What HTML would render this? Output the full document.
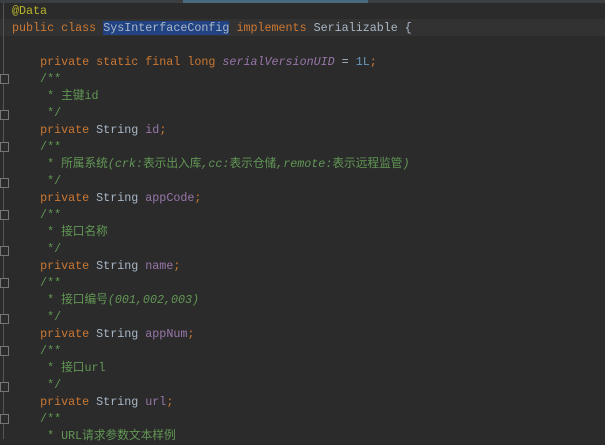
<!DOCTYPE html><html><head><meta charset="utf-8"><style>
body{margin:0;width:605px;height:439px;overflow:hidden;background:#2b2b2b;position:relative;font-family:"Liberation Mono","Noto Sans CJK SC",monospace;font-size:11.7px;color:#a9b7c6}
.l{position:absolute;left:12px;height:17px;line-height:17px;white-space:pre;margin-top:1px}
.k{color:#cc7832}.c{color:#629755}.f{color:#9876aa}.n{color:#6897bb}.a{color:#bbb529}.i{font-style:italic}
.top{position:absolute;top:0;left:0;width:605px;height:3px;background:#3c3f41}
.top b{position:absolute;left:183px;width:185px;height:3px;background:#4a6a80}
.hl{position:absolute;left:0;top:19px;width:605px;height:17px;background:#323232}
.g{position:absolute;left:3px;top:3px;width:1px;height:436px;background:#555}
.fm{position:absolute;left:0;width:7px;height:8px;border:1px solid #777;background:#2b2b2b}
.sel{background:#214283}
</style></head><body>
<div class="top"><b></b></div><div class="hl"></div><div class="g"></div>
<div class="fm" style="top:74px"></div><div class="fm" style="top:110px"></div>
<div class="fm" style="top:142px"></div><div class="fm" style="top:178px"></div>
<div class="fm" style="top:210px"></div><div class="fm" style="top:246px"></div>
<div class="fm" style="top:278px"></div><div class="fm" style="top:314px"></div>
<div class="fm" style="top:346px"></div><div class="fm" style="top:382px"></div>
<div class="fm" style="top:414px"></div>
<div class="l" style="top:2px"><span class="a">@Data</span></div>
<div class="l" style="top:19px"><span class="k">public class </span><span class="sel">SysInterfaceConfig</span> <span class="k">implements </span>Serializable {</div>
<div class="l" style="top:53px">    <span class="k">private static final long </span><span class="f i">serialVersionUID</span> = <span class="n">1L</span><span class="k">;</span></div>
<div class="l c" style="top:70px">    /**</div>
<div class="l c" style="top:87px">     * 主键id</div>
<div class="l c" style="top:104px">     */</div>
<div class="l" style="top:121px">    <span class="k">private </span>String <span class="f">id</span><span class="k">;</span></div>
<div class="l c" style="top:138px">    /**</div>
<div class="l c" style="top:155px">     * 所属系统<span class="i">(crk:</span>表示出入库<span class="i">,cc:</span>表示仓储<span class="i">,remote:</span>表示远程监管<span class="i">)</span></div>
<div class="l c" style="top:172px">     */</div>
<div class="l" style="top:189px">    <span class="k">private </span>String <span class="f">appCode</span><span class="k">;</span></div>
<div class="l c" style="top:206px">    /**</div>
<div class="l c" style="top:223px">     * 接口名称</div>
<div class="l c" style="top:240px">     */</div>
<div class="l" style="top:257px">    <span class="k">private </span>String <span class="f">name</span><span class="k">;</span></div>
<div class="l c" style="top:274px">    /**</div>
<div class="l c" style="top:291px">     * 接口编号<span class="i">(001,002,003)</span></div>
<div class="l c" style="top:308px">     */</div>
<div class="l" style="top:325px">    <span class="k">private </span>String <span class="f">appNum</span><span class="k">;</span></div>
<div class="l c" style="top:342px">    /**</div>
<div class="l c" style="top:359px">     * 接口url</div>
<div class="l c" style="top:376px">     */</div>
<div class="l" style="top:393px">    <span class="k">private </span>String <span class="f">url</span><span class="k">;</span></div>
<div class="l c" style="top:410px">    /**</div>
<div class="l c" style="top:427px">     * URL请求参数文本样例</div>
</body></html>
